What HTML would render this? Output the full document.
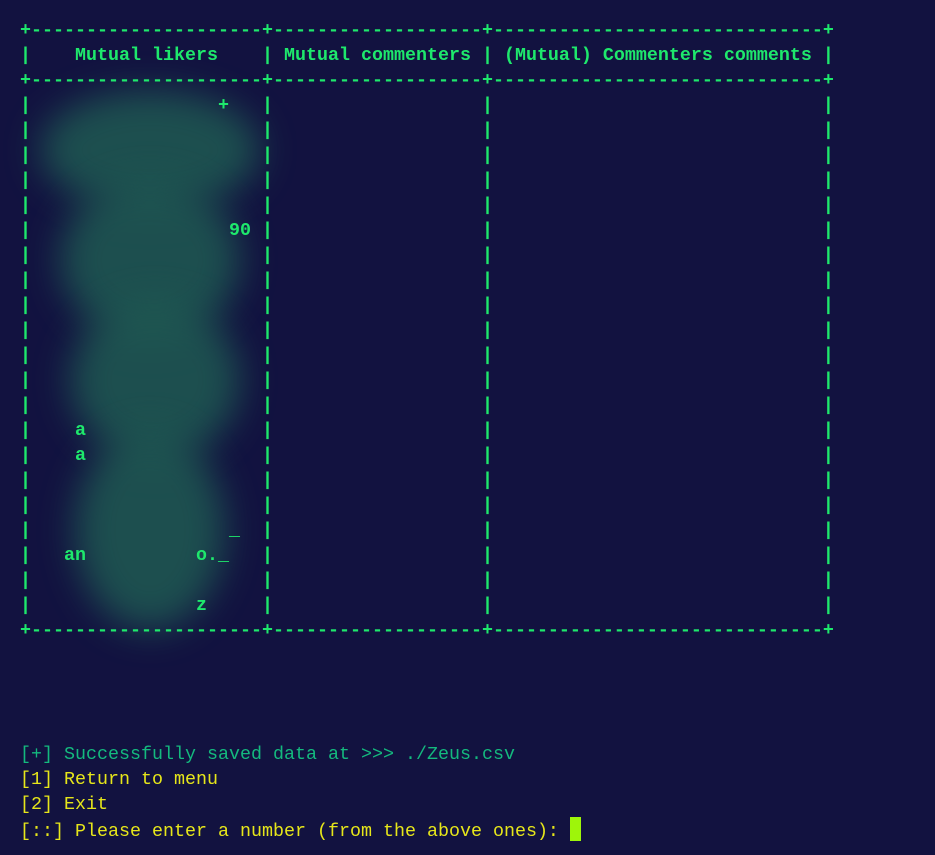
<!DOCTYPE html>
<html><head><meta charset="utf-8">
<style>
html,body{margin:0;padding:0;background:#121240;width:935px;height:855px;overflow:hidden;position:relative}
pre{position:absolute;left:20px;margin:0;font-family:"Liberation Mono",monospace;font-size:18.33px;line-height:25px;white-space:pre;font-weight:bold;}
.t{top:18px;color:#1ee86c}
.b{top:742px;font-weight:normal}
.g{color:#14b97e}.y{color:#e6e61a}
.cur{display:inline-block;width:11px;height:24px;background:#9ef50a;vertical-align:-5px}
.blob{position:absolute;border-radius:50%;background:#1f5a52;filter:blur(18px);opacity:.85}
</style></head><body>
<div class="blob" style="left:40px;top:90px;width:220px;height:120px"></div>
<div class="blob" style="left:60px;top:180px;width:180px;height:160px"></div>
<div class="blob" style="left:70px;top:300px;width:170px;height:160px"></div>
<div class="blob" style="left:75px;top:430px;width:150px;height:200px"></div>
<pre class="t">+---------------------+-------------------+------------------------------+
|    Mutual likers    | Mutual commenters | (Mutual) Commenters comments |
+---------------------+-------------------+------------------------------+
|                 +   |                   |                              |
|                     |                   |                              |
|                     |                   |                              |
|                     |                   |                              |
|                     |                   |                              |
|                  90 |                   |                              |
|                     |                   |                              |
|                     |                   |                              |
|                     |                   |                              |
|                     |                   |                              |
|                     |                   |                              |
|                     |                   |                              |
|                     |                   |                              |
|    a                |                   |                              |
|    a                |                   |                              |
|                     |                   |                              |
|                     |                   |                              |
|                  _  |                   |                              |
|   an          o._   |                   |                              |
|                     |                   |                              |
|               z     |                   |                              |
+---------------------+-------------------+------------------------------+</pre>
<pre class="b"><span class="g">[+] Successfully saved data at &gt;&gt;&gt; ./Zeus.csv</span>
<span class="y">[1] Return to menu</span>
<span class="y">[2] Exit</span>
<span class="y">[::] Please enter a number (from the above ones): </span><span class="cur"></span></pre>
</body></html>
